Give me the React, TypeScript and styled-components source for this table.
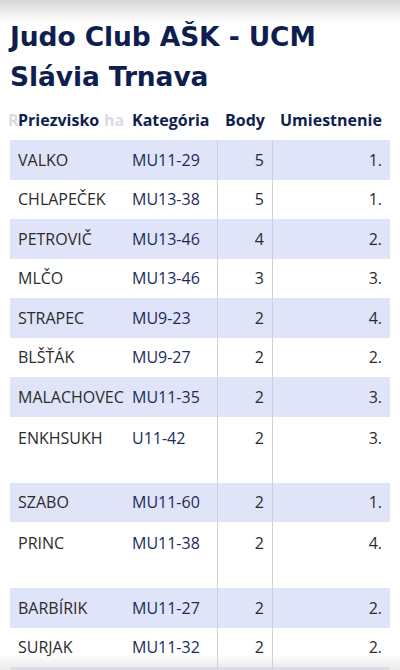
import styled, { createGlobalStyle } from "styled-components";

const GlobalStyle = createGlobalStyle`
  html, body {
    margin: 0;
    padding: 0;
    background: #ffffff;
  }
  body {
    font-family: "Open Sans", "Liberation Sans", sans-serif;
  }
`;

type Result = {
  name: string;
  category: string;
  points: number;
  place: string;
  tall?: boolean;
};

const results: Result[] = [
  { name: "VALKO", category: "MU11-29", points: 5, place: "1." },
  { name: "CHLAPEČEK", category: "MU13-38", points: 5, place: "1." },
  { name: "PETROVIČ", category: "MU13-46", points: 4, place: "2." },
  { name: "MLČO", category: "MU13-46", points: 3, place: "3." },
  { name: "STRAPEC", category: "MU9-23", points: 2, place: "4." },
  { name: "BLŠŤÁK", category: "MU9-27", points: 2, place: "2." },
  { name: "MALACHOVEC", category: "MU11-35", points: 2, place: "3." },
  { name: "ENKHSUKH", category: "U11-42", points: 2, place: "3.", tall: true },
  { name: "SZABO", category: "MU11-60", points: 2, place: "1." },
  { name: "PRINC", category: "MU11-38", points: 2, place: "4.", tall: true },
  { name: "BARBÍRIK", category: "MU11-27", points: 2, place: "2." },
  { name: "SURJAK", category: "MU11-32", points: 2, place: "2." },
  { name: "", category: "", points: 0, place: "" },
];

const Page = styled.div`
  padding: 17px 10px 0;
  height: 670px;
  box-sizing: border-box;
  overflow: hidden;
`;

const Title = styled.h1`
  margin: 0;
  font-family: "DejaVu Sans", Verdana, sans-serif;
  font-weight: 700;
  font-size: 26.5px;
  line-height: 40px;
  color: #0e1e4e;
  letter-spacing: -0.1px;
`;

const Table = styled.div`
  width: 380px;
`;

const Row = styled.div<{ $striped?: boolean; $height: number; $top?: boolean }>`
  display: grid;
  grid-template-columns: 114px 93px 55px 118px;
  height: ${({ $height }) => $height}px;
  align-items: ${({ $top }) => ($top ? "start" : "center")};
  background: ${({ $striped }) => ($striped ? "#e0e4f8" : "transparent")};
`;

const HeadRow = styled.div`
  display: grid;
  grid-template-columns: 114px 93px 55px 118px;
  height: 43px;
  align-items: end;
`;

const HeadCell = styled.div`
  position: relative;
  padding: 0 0 10px 8px;
  font-weight: 700;
  font-size: 16px;
  line-height: 20px;
  color: #0f1f4d;
  white-space: nowrap;
`;

const Ghost = styled.span<{ $left: number }>`
  position: absolute;
  left: ${({ $left }) => $left}px;
  bottom: 10px;
  font-weight: 700;
  font-size: 16px;
  line-height: 20px;
  color: #d9dbe2;
`;

const Cell = styled.div<{ $align?: "left" | "right"; $line?: boolean; $tone?: "name" | "cat" }>`
  box-sizing: border-box;
  height: 100%;
  display: flex;
  align-items: inherit;
  justify-content: ${({ $align }) => ($align === "right" ? "flex-end" : "flex-start")};
  padding: 0 ${({ $align }) => ($align === "right" ? "8px" : "0")} 0
    ${({ $align }) => ($align === "right" ? "0" : "8px")};
  border-left: ${({ $line }) => ($line ? "1px solid #cfd1d9" : "none")};
  font-size: 16px;
  line-height: 20px;
  color: ${({ $tone }) => ($tone === "cat" ? "#1c2b5a" : "#2b2b2b")};
  white-space: nowrap;
`;

const CellText = styled.span<{ $top?: boolean }>`
  padding-top: ${({ $top }) => ($top ? "11px" : "0")};
`;

const TopShade = styled.div`
  position: fixed;
  left: 0;
  top: 0;
  width: 100%;
  height: 22px;
  background: linear-gradient(to bottom, rgba(200, 200, 200, 0.75), rgba(255, 255, 255, 0));
  pointer-events: none;
`;

const BottomShade = styled.div`
  position: fixed;
  left: 0;
  bottom: 0;
  width: 100%;
  height: 16px;
  background: linear-gradient(to top, rgba(215, 215, 215, 0.55), rgba(255, 255, 255, 0));
  pointer-events: none;
`;

export default function App() {
  return (
    <>
      <GlobalStyle />
      <Page>
        <Title>
          Judo Club AŠK - UCM
          <br />
          Slávia Trnava
        </Title>
        <Table>
          <HeadRow>
            <HeadCell>
              <Ghost $left={-2}>R</Ghost>
              <Ghost $left={94}>ha</Ghost>
              Priezvisko
            </HeadCell>
            <HeadCell>Kategória</HeadCell>
            <HeadCell>Body</HeadCell>
            <HeadCell>Umiestnenie</HeadCell>
          </HeadRow>
          {results.map((r, i) => (
            <Row
              key={i}
              $striped={i % 2 === 0}
              $height={r.tall ? 66 : 39.5}
              $top={r.tall}
            >
              <Cell $tone="name">
                <CellText $top={r.tall}>{r.name}</CellText>
              </Cell>
              <Cell $tone="cat">
                <CellText $top={r.tall}>{r.category}</CellText>
              </Cell>
              <Cell $align="right" $line>
                <CellText $top={r.tall}>{r.name ? r.points : ""}</CellText>
              </Cell>
              <Cell $align="right" $line>
                <CellText $top={r.tall}>{r.place}</CellText>
              </Cell>
            </Row>
          ))}
        </Table>
      </Page>
      <TopShade />
      <BottomShade />
    </>
  );
}
